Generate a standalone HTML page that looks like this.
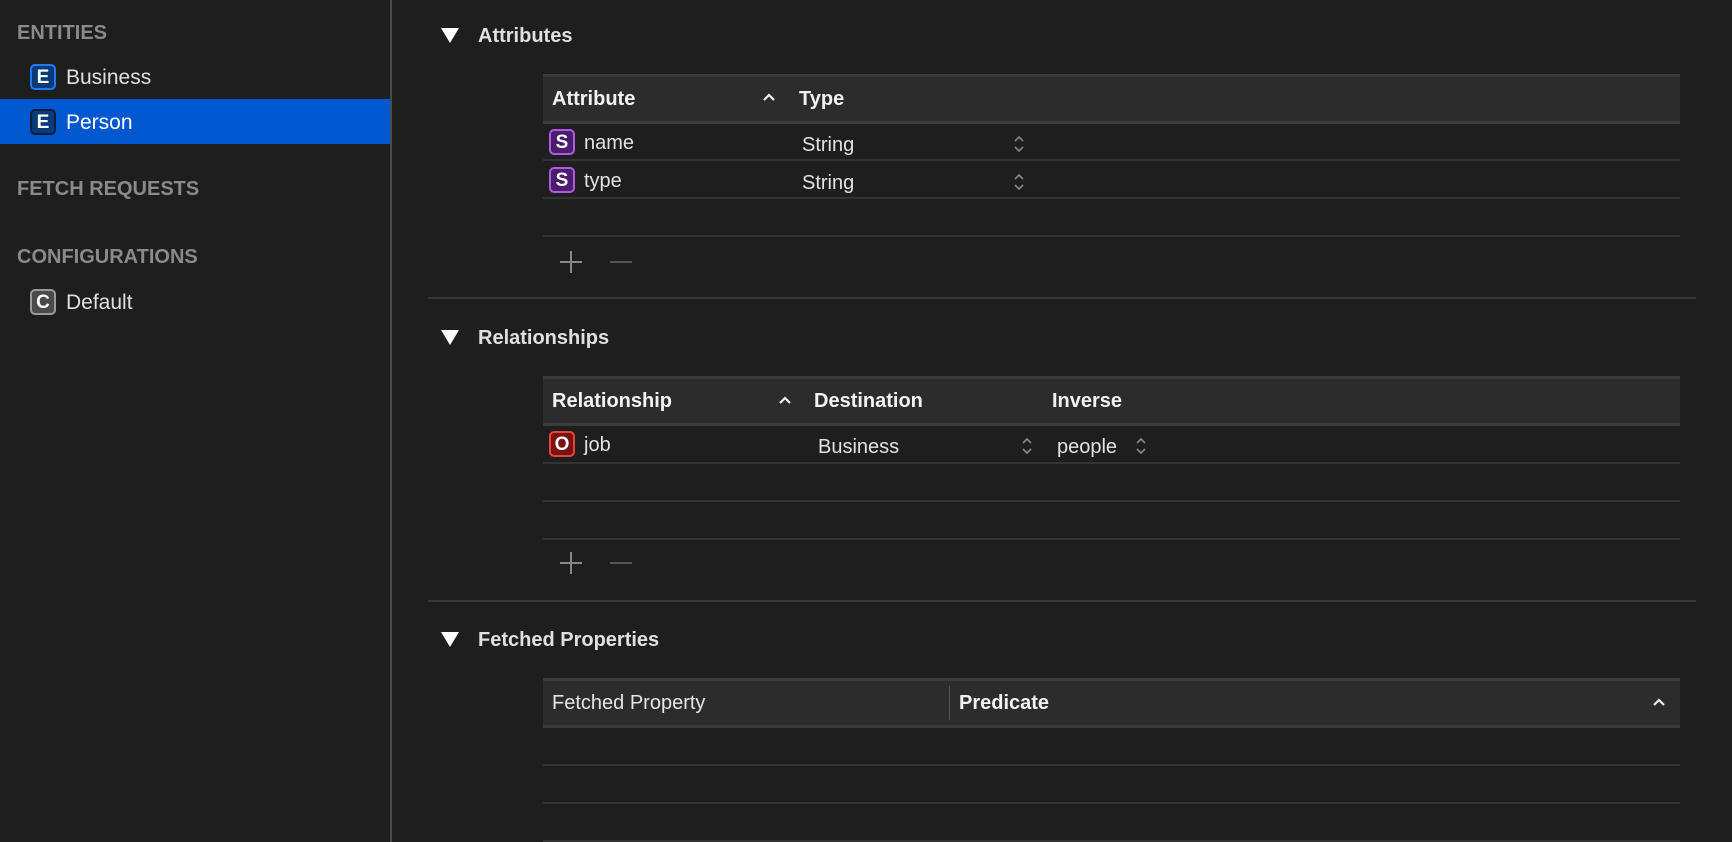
<!DOCTYPE html>
<html><head><meta charset="utf-8"><style>
*{margin:0;padding:0;box-sizing:border-box}
body{width:1732px;height:842px;background:#1e1e1e;font-family:"Liberation Sans",sans-serif;color:#dcdcdc;position:relative;overflow:hidden}
.a{position:absolute;white-space:nowrap}
.sh{font-size:20px;font-weight:bold;color:#8a8a8a;left:17px}
.it{font-size:21px;color:#e0e0e0;left:66px}
.ic{position:absolute;width:26px;height:26px;border-radius:5px;font-weight:bold;font-size:19px;color:#fff;text-align:center;line-height:23px;border:2px solid}
.tri{position:absolute;width:0;height:0;border-left:9px solid transparent;border-right:9px solid transparent;border-top:15px solid #fff}
.h{font-size:20px;font-weight:bold;color:#e0e0e0;left:478px}
.th{position:absolute;left:543px;width:1137px;background:#2c2c2c;border-top:3px solid #3b3b3b;border-bottom:3px solid #3b3b3b}
.ln{position:absolute;left:543px;width:1137px;height:2px;background:#333}
.t{font-size:20px;color:#e2e2e2}
.b{font-weight:bold;color:#f2f2f2}
svg{position:absolute}
.pm{position:absolute}
</style></head><body>
<div class="a" style="left:390px;top:0;width:2px;height:842px;background:#4a4a4a"></div>
<div class="a" style="left:0;top:99px;width:390px;height:45px;background:#0058d0"></div>
<div class="a sh" style="top:22px">ENTITIES</div>
<div class="ic" style="left:30px;top:64px;background:#0b3a7a;border-color:#1f7cf0">E</div>
<div class="a it" style="top:66px">Business</div>
<div class="ic" style="left:30px;top:109px;background:#0b3a7a;border-color:#111c3a">E</div>
<div class="a it" style="top:111px;color:#fff">Person</div>
<div class="a sh" style="top:178px">FETCH REQUESTS</div>
<div class="a sh" style="top:246px">CONFIGURATIONS</div>
<div class="ic" style="left:30px;top:289px;background:#4a4a4a;border-color:#9a9a9a">C</div>
<div class="a it" style="top:291px">Default</div>

<!-- Attributes -->
<div class="tri" style="left:441px;top:28px"></div>
<div class="a h" style="top:25px">Attributes</div>
<div class="th" style="top:74px;height:50px"></div>
<div class="a t b" style="left:552px;top:88px">Attribute</div>
<svg style="left:762px;top:93px" width="14" height="9"><path d="M2 7L7 2L12 7" stroke="#eee" stroke-width="2.2" fill="none"/></svg>
<div class="a t b" style="left:799px;top:88px">Type</div>
<div class="ic" style="left:549px;top:129px;background:#4a1d6e;border-color:#b05ae0">S</div>
<div class="a t" style="left:584px;top:132px">name</div>
<div class="a t" style="left:802px;top:134px">String</div>
<svg style="left:1012px;top:133px" width="14" height="22"><path d="M3 8L7 4L11 8M3 14L7 18L11 14" stroke="#8a8a8a" stroke-width="1.6" fill="none"/></svg>
<div class="ln" style="top:159px"></div>
<div class="ic" style="left:549px;top:167px;background:#4a1d6e;border-color:#b05ae0">S</div>
<div class="a t" style="left:584px;top:170px">type</div>
<div class="a t" style="left:802px;top:172px">String</div>
<svg style="left:1012px;top:171px" width="14" height="22"><path d="M3 8L7 4L11 8M3 14L7 18L11 14" stroke="#8a8a8a" stroke-width="1.6" fill="none"/></svg>
<div class="ln" style="top:197px"></div>
<div class="ln" style="top:235px"></div>
<div class="pm" style="left:560px;top:261px;width:22px;height:2px;background:#888"></div>
<div class="pm" style="left:570px;top:251px;width:2px;height:22px;background:#888"></div>
<div class="pm" style="left:610px;top:261px;width:22px;height:2px;background:#555"></div>
<div class="a" style="left:428px;top:297px;width:1268px;height:2px;background:#383838"></div>

<!-- Relationships -->
<div class="tri" style="left:441px;top:330px"></div>
<div class="a h" style="top:327px">Relationships</div>
<div class="th" style="top:376px;height:50px"></div>
<div class="a t b" style="left:552px;top:390px">Relationship</div>
<svg style="left:778px;top:396px" width="14" height="9"><path d="M2 7L7 2L12 7" stroke="#eee" stroke-width="2.2" fill="none"/></svg>
<div class="a t b" style="left:814px;top:390px">Destination</div>
<div class="a t b" style="left:1052px;top:390px">Inverse</div>
<div class="ic" style="left:549px;top:431px;background:#7a1212;border-color:#e8453a">O</div>
<div class="a t" style="left:584px;top:434px">job</div>
<div class="a t" style="left:818px;top:436px">Business</div>
<svg style="left:1020px;top:435px" width="14" height="22"><path d="M3 8L7 4L11 8M3 14L7 18L11 14" stroke="#8a8a8a" stroke-width="1.6" fill="none"/></svg>
<div class="a t" style="left:1057px;top:436px">people</div>
<svg style="left:1134px;top:435px" width="14" height="22"><path d="M3 8L7 4L11 8M3 14L7 18L11 14" stroke="#8a8a8a" stroke-width="1.6" fill="none"/></svg>
<div class="ln" style="top:462px"></div>
<div class="ln" style="top:500px"></div>
<div class="ln" style="top:538px"></div>
<div class="pm" style="left:560px;top:562px;width:22px;height:2px;background:#888"></div>
<div class="pm" style="left:570px;top:552px;width:2px;height:22px;background:#888"></div>
<div class="pm" style="left:610px;top:562px;width:22px;height:2px;background:#555"></div>
<div class="a" style="left:428px;top:600px;width:1268px;height:2px;background:#383838"></div>

<!-- Fetched -->
<div class="tri" style="left:441px;top:632px"></div>
<div class="a h" style="top:629px">Fetched Properties</div>
<div class="th" style="top:678px;height:50px"></div>
<div class="a t" style="left:552px;top:692px;color:#e6e6e6">Fetched Property</div>
<div class="a" style="left:949px;top:686px;width:1px;height:34px;background:#555"></div>
<div class="a t b" style="left:959px;top:692px">Predicate</div>
<svg style="left:1652px;top:698px" width="14" height="9"><path d="M2 7L7 2L12 7" stroke="#eee" stroke-width="2.2" fill="none"/></svg>
<div class="ln" style="top:764px"></div>
<div class="ln" style="top:802px"></div>
<div class="ln" style="top:840px"></div>
</body></html>
